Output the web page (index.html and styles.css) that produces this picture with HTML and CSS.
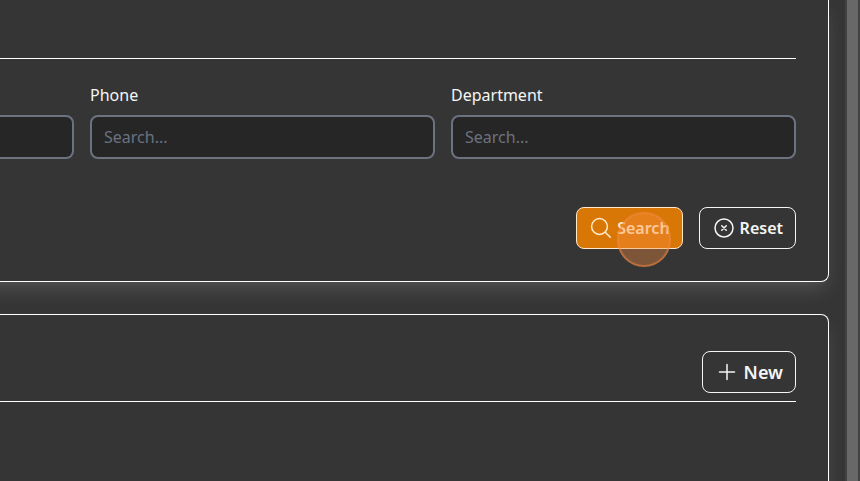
FILE: index.html
```html
<!DOCTYPE html>
<html lang="en">
<head>
<meta charset="utf-8">
<title>Search</title>
<link rel="stylesheet" href="styles.css">
</head>
<body>
<main class="content">
  <section class="card filters">
    <div class="card-header"></div>
    <div class="fields">
      <label class="field"><span class="label"></span><input type="text"></label>
      <label class="field"><span class="label">Phone</span><input type="text" placeholder="Search..."></label>
      <label class="field"><span class="label">Department</span><input type="text" placeholder="Search..."></label>
    </div>
    <div class="actions">
      <button class="btn primary">
        <svg class="icon" viewBox="0 0 24 24"><circle cx="10.5" cy="10.5" r="7.9"/><path d="m16.2 16.2 5.1 5.1"/></svg>
        <span>Search</span>
        <i class="click-marker"></i>
      </button>
      <button class="btn">
        <svg class="icon" viewBox="0 0 24 24"><circle cx="12" cy="12" r="9"/><path d="m9.75 9.75 4.5 4.5m0-4.5-4.5 4.5"/></svg>
        <span>Reset</span>
      </button>
    </div>
  </section>
  <section class="card results">
    <div class="card-header">
      <button class="btn new">
        <svg class="icon" viewBox="0 0 24 24"><path d="M12 4.5v15M4.5 12h15"/></svg>
        <span>New</span>
      </button>
    </div>
  </section>
</main>
<div class="scrollbar"><div class="thumb"></div></div>
</body>
</html>
```

FILE: styles.css
```css
* { box-sizing: border-box; }
body {
  margin: 0;
  height: 481px;
  display: flex;
  overflow: hidden;
  background: #353535;
  color: #f5f5f5;
  font: 16px/24px "Noto Sans", sans-serif;
}
.content {
  flex: 1;
  min-width: 0;
  overflow: hidden;
}
.card {
  margin: 0 16px 0 -40px;
  padding: 0 32px 0 40px;
  background: #353535;
  border: 1px solid #fff;
  border-left: 0;
  box-shadow: 0 10px 20px -3px rgba(255, 255, 255, .14), 0 4px 6px -2px rgba(255, 255, 255, .03);
}
.filters {
  height: 282px;
  border-top: 0;
  border-radius: 0 0 8px 0;
}
.results {
  height: 400px;
  margin-top: 32px;
  padding-top: 36px;
  border-radius: 0 8px 0 0;
}
.card-header {
  display: flex;
  justify-content: flex-end;
  border-bottom: 1px solid #fff;
}
.filters .card-header { height: 59px; }
.results .card-header { height: 51px; }
.fields {
  display: grid;
  grid-template-columns: 74px 345px 345px;
  gap: 16px;
  padding-top: 24px;
}
.field { display: block; }
.label {
  display: block;
  height: 24px;
  margin-bottom: 8px;
}
input {
  display: block;
  width: 100%;
  height: 44px;
  padding: 0 12px;
  border: 2px solid #6b7280;
  border-radius: 8px;
  background: #262626;
  color: #f5f5f5;
  font: inherit;
}
.field:first-child input {
  border-left: 0;
  border-radius: 0 8px 8px 0;
}
input::placeholder { color: #6b7280; }
.actions {
  display: flex;
  justify-content: flex-end;
  gap: 16px;
  padding-top: 48px;
}
.btn {
  position: relative;
  display: flex;
  align-items: center;
  gap: 4px;
  height: 42px;
  padding: 0 12px;
  border: 1px solid #f5f5f5;
  border-radius: 8px;
  background: transparent;
  color: #f5f5f5;
  font: 600 16px/24px "Noto Sans", sans-serif;
}
.primary {
  background: #d97706;
  border-color: #fde9c8;
  color: #fdeccb;
}
.new {
  gap: 4.5px;
  padding-left: 12.5px;
  font-size: 18px;
}
.icon {
  width: 24px;
  height: 24px;
  fill: none;
  stroke: currentColor;
  stroke-width: 1.5;
  stroke-linecap: round;
  stroke-linejoin: round;
}
.click-marker {
  position: absolute;
  left: 39.5px;
  top: 4px;
  width: 54px;
  height: 55px;
  border: 2px solid rgba(240, 138, 65, .5);
  border-radius: 50%;
  background: rgba(249, 142, 65, .37);
}
.scrollbar {
  width: 15px;
  padding: 0 2px;
  background: #424242;
}
.thumb {
  height: 100%;
  background: #686868;
}
```
